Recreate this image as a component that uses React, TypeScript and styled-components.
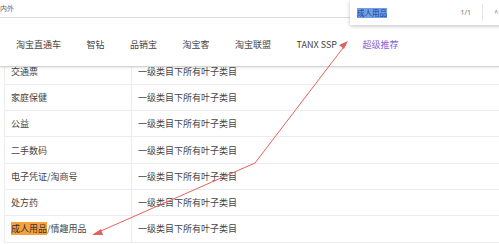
import React from "react";
import styled, { createGlobalStyle } from "styled-components";

const Global = createGlobalStyle`
  html, body { margin: 0; padding: 0; background: #fff; }
  body { font-family: "Noto Sans CJK SC", "Noto Sans", sans-serif; color: #333; }
`;

const Page = styled.div`
  position: relative;
  width: 499px;
  height: 244px;
  overflow: hidden;
  background: #fff;
`;

const TopBar = styled.div`
  height: 18px;
  border-bottom: 1px solid #dcdcdc;
  display: flex;
  align-items: center;
  font-size: 7px;
  color: #666;
  box-sizing: border-box;
  padding-bottom: 2px;
`;

const Nav = styled.nav`
  position: relative;
  z-index: 2;
  height: 49px;
  display: flex;
  align-items: center;
  gap: 25.5px;
  padding-left: 16px;
  padding-top: 4px;
  background: #fff;
  font-size: 9px;
  color: #444;
  border-bottom: 1px solid #d4d4d4;
  box-shadow: 0 1px 2px rgba(0, 0, 0, 0.1);
  box-sizing: border-box;
`;

const NavItem = styled.span<{ $active?: boolean }>`
  white-space: nowrap;
  color: ${(p) => (p.$active ? "#8a5fd6" : "#444")};
  font-family: "Noto Sans CJK SC", "Open Sans", sans-serif;
`;

const Viewport = styled.div`
  height: 177px;
  overflow: hidden;
`;

const Table = styled.div`
  margin-top: -8.5px;
  margin-left: 4px;
  border-left: 1px solid #ececec;
`;

const Row = styled.div`
  display: grid;
  grid-template-columns: 127px 1fr;
  height: 26.3px;
  border-bottom: 1px solid #ececec;
  box-sizing: border-box;
  font-size: 9px;
  color: #444;
`;

const Cell = styled.div<{ $first?: boolean }>`
  display: flex;
  align-items: center;
  padding-left: 6px;
  border-right: ${(p) => (p.$first ? "1px solid #ececec" : "none")};
  white-space: nowrap;
`;

const Mark = styled.span`
  background: #f6a23c;
  color: #333;
`;

const SearchBox = styled.div`
  position: absolute;
  top: 0;
  left: 350px;
  width: 160px;
  height: 25px;
  background: #fff;
  box-shadow: 0 1px 4px rgba(0, 0, 0, 0.25);
  display: flex;
  align-items: center;
  z-index: 5;
  font-size: 7.5px;
  color: #555;
  box-sizing: border-box;
  padding-left: 7px;
`;

const Query = styled.span`
  background: #6f9de6;
  color: #1b3f8a;
  line-height: 10px;
`;

const Count = styled.span`
  margin-left: auto;
  margin-right: 11px;
  font-family: "Open Sans", sans-serif;
  font-size: 7px;
  color: #666;
`;

const Sep = styled.span`
  width: 1px;
  height: 17px;
  background: #e4e4e4;
`;

const Caret = styled.span`
  margin-left: 11px;
  width: 16px;
  font-size: 8px;
  color: #888;
`;

const Overlay = styled.svg`
  position: absolute;
  left: 0;
  top: 0;
  z-index: 10;
  pointer-events: none;
`;

const rows: { name: React.ReactNode }[] = [
  { name: "交通票" },
  { name: "家庭保健" },
  { name: "公益" },
  { name: "二手数码" },
  { name: "电子凭证/淘商号" },
  { name: "处方药" },
  {
    name: (
      <>
        <Mark>成人用品</Mark>/情趣用品
      </>
    ),
  },
];

const navItems = ["淘宝直通车", "智钻", "品销宝", "淘宝客", "淘宝联盟", "TANX SSP"];

export default function App() {
  return (
    <Page>
      <Global />
      <TopBar>内外</TopBar>
      <Nav>
        {navItems.map((n) => (
          <NavItem key={n}>{n}</NavItem>
        ))}
        <NavItem $active>超级推荐</NavItem>
      </Nav>
      <Viewport>
        <Table>
          {rows.map((r, i) => (
            <Row key={i}>
              <Cell $first>{r.name}</Cell>
              <Cell>一级类目下所有叶子类目</Cell>
            </Row>
          ))}
        </Table>
      </Viewport>
      <SearchBox>
        <Query>成人用品</Query>
        <Count>1/1</Count>
        <Sep />
        <Caret>^</Caret>
      </SearchBox>
      <Overlay width="499" height="244" viewBox="0 0 499 244">
        <g stroke="#e0645c" strokeWidth="1" fill="none">
          <polyline points="94,234 255,163 346,44" />
        </g>
        <polygon points="348,41 339,45 344,49" fill="#e0645c" />
        <polygon points="92,235 101,229 103,235" fill="#e0645c" />
      </Overlay>
    </Page>
  );
}
